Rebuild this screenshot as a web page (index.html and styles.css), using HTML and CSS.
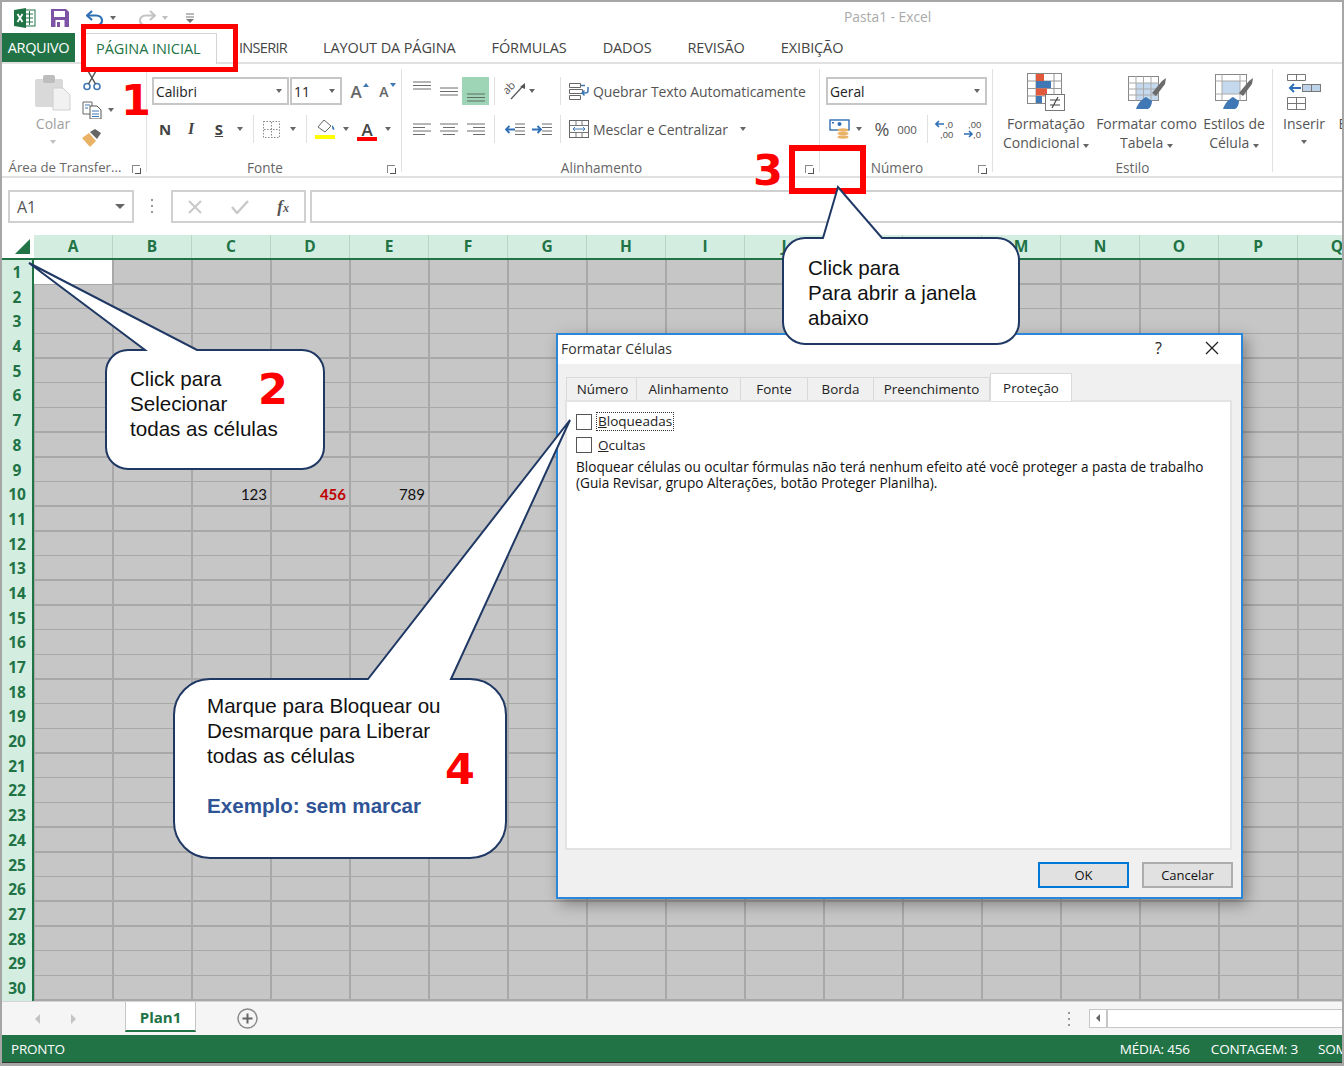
FILE: index.html
```html
<!DOCTYPE html>
<html lang="pt-BR">
<head>
<meta charset="UTF-8">
<title>Pasta1 - Excel</title>
<link rel="stylesheet" href="styles.css">
</head>
<body>
<div class="excel">

  <!-- quick access bar -->
  <div class="qat">
    <svg class="qat-logo" width="22" height="20" viewBox="0 0 22 20"><rect x="8" y="2" width="13" height="16" fill="#fff" stroke="#217346"/><path d="M12 6h7M12 10h7M12 14h7M15.500 3v14" stroke="#217346"/><path d="M0 2l12-2v20L0 18z" fill="#217346"/><path d="M3.500 6l5 8M8.500 6l-5 8" stroke="#fff" stroke-width="1.800"/></svg>
    <svg class="qat-save" width="18" height="18" viewBox="0 0 18 18"><path d="M0 0h15l3 3v15H0z" fill="#7d53a6"/><rect x="3" y="2" width="11" height="6" fill="#fff"/><rect x="4.500" y="11" width="9" height="7" fill="#fff"/><rect x="6" y="13" width="3" height="5" fill="#7d53a6"/></svg>
    <svg class="qat-undo" width="18" height="16" viewBox="0 0 18 16"><path d="M6 1L1 5.500 6 10" fill="none" stroke="#2f6fb5" stroke-width="2.200"/><path d="M2 5.500h8c4 0 6 2.500 6 5s-2 4.500-4 4.500" fill="none" stroke="#2f6fb5" stroke-width="2.200"/></svg>
    <span class="caret qat-caret"></span>
    <svg class="qat-redo" width="18" height="16" viewBox="0 0 18 16"><path d="M12 1l5 4.500L12 10" fill="none" stroke="#c4c4c4" stroke-width="2.200"/><path d="M16 5.500H8c-4 0-6 2.500-6 5s2 4.500 4 4.500" fill="none" stroke="#c4c4c4" stroke-width="2.200"/></svg>
    <span class="caret caret-light qat-caret"></span>
    <svg class="qat-more" width="8" height="10" viewBox="0 0 8 10"><path d="M0 1h8M0 4h8" stroke="#777"/><path d="M0 6h8L4 10z" fill="#777"/></svg>
    <div class="qat-title">Pasta1 - Excel</div>
  </div>

  <!-- tabs -->
  <div class="tabs">
    <div class="tab-file">ARQUIVO</div>
    <div class="tab tab-active">PÁGINA INICIAL</div>
    <div class="tab tab-first">INSERIR</div>
    <div class="tab">LAYOUT DA PÁGINA</div>
    <div class="tab">FÓRMULAS</div>
    <div class="tab">DADOS</div>
    <div class="tab">REVISÃO</div>
    <div class="tab">EXIBIÇÃO</div>
  </div>

  <!-- ribbon -->
  <div class="ribbon">

    <div class="group group-clip">
      <div class="group-body">
        <div class="big-btn colar">
          <svg class="big-icon" width="36" height="36" viewBox="0 0 36 36"><rect x="0" y="5" width="28" height="28" rx="2" fill="#d9d9d9"/><rect x="8" y="1" width="12" height="8" rx="2" fill="#bdbdbd"/><path d="M18 14h10l7 7v15H18z" fill="#f1f1f1" stroke="#cfcfcf"/></svg>
          <span class="big-text muted">Colar</span>
          <span class="caret caret-light"></span>
        </div>
        <div class="clip-tools">
          <svg class="clip-scissors" width="20" height="20" viewBox="0 0 20 20"><circle cx="5" cy="15.500" r="3" fill="none" stroke="#3f78b5" stroke-width="1.600"/><circle cx="15" cy="15.500" r="3" fill="none" stroke="#3f78b5" stroke-width="1.600"/><path d="M6.500 13L14 0M13.500 13L6 0" stroke="#555" stroke-width="1.500"/></svg>
          <div class="clip-copy">
            <svg width="20" height="18" viewBox="0 0 20 18"><path d="M1 1h9v12H1z" fill="#fff" stroke="#666"/><path d="M8 5h7l4 4v9H8z" fill="#fff" stroke="#555"/><path d="M3 4h5M3 7h3M10 10h7M10 13h7M10 15.500h7" stroke="#3f78b5"/></svg>
            <span class="caret"></span>
          </div>
          <svg class="clip-brush" width="20" height="18" viewBox="0 0 20 18"><path d="M0 9l7-5 7 8-6 6z" fill="#e9b266"/><path d="M8 3l5-3 6 4-4 6z" fill="#666"/></svg>
        </div>
      </div>
      <div class="group-foot"><span class="group-label">Área de Transfer...</span><span class="launcher"></span></div>
    </div>

    <div class="group group-font">
      <div class="group-body stack">
        <div class="row">
          <div class="select select-font"><span>Calibri</span><i class="caret"></i></div>
          <div class="select select-size"><span>11</span><i class="caret"></i></div>
          <div class="btn grow-a">A<i class="tri tri-up"></i></div>
          <div class="btn shrink-a">A<i class="tri tri-down"></i></div>
        </div>
        <div class="row">
          <div class="btn w26 fmt"><b>N</b></div>
          <div class="btn w26 fmt fmt-i">I</div>
          <div class="btn w30 fmt"><b class="under">S</b></div>
          <span class="btn w12"><i class="caret"></i></span>
          <span class="sep ml7"></span>
          <div class="btn w30 ml2"><svg width="17" height="17" viewBox="0 0 17 17"><path d="M.500.500h16v16H.500z" fill="none" stroke="#888" stroke-dasharray="1.500 1.500"/><path d="M8.500 1v15M1 8.500h15" stroke="#888" stroke-dasharray="1.500 1.500"/></svg></div>
          <span class="btn w14"><i class="caret"></i></span>
          <span class="sep ml6"></span>
          <div class="btn w30 ml3"><svg width="22" height="22" viewBox="0 0 22 22"><path d="M4 9l6-7 7 6-6 6z" fill="#fff" stroke="#666"/><path d="M18 7c2 2 3 4 2 5-2 0-2-3-2-5z" fill="#3f78b5"/><rect x="1" y="17" width="20" height="4" fill="#ffff00"/></svg></div>
          <span class="btn w12"><i class="caret"></i></span>
          <div class="btn w30 font-color">A</div>
          <span class="btn w12"><i class="caret"></i></span>
        </div>
      </div>
      <div class="group-foot"><span class="group-label">Fonte</span><span class="launcher"></span></div>
    </div>

    <div class="group group-align">
      <div class="group-body stack">
        <div class="row">
          <div class="btn w27 at-top"><svg width="18" height="9" viewBox="0 0 18 9"><path d="M0 1h18M0 4.500h18M0 8h18" stroke="#6d6d6d"/></svg></div>
          <div class="btn w27 at-mid"><svg width="18" height="9" viewBox="0 0 18 9"><path d="M0 1h18M0 4.500h18M0 8h18" stroke="#6d6d6d"/></svg></div>
          <div class="btn w27 btn-on at-bot"><svg width="18" height="9" viewBox="0 0 18 9"><path d="M0 1h18M0 4.500h18M0 8h18" stroke="#5f6f66"/></svg></div>
          <span class="sep ml5"></span>
          <div class="btn w24 ml8"><svg width="22" height="20" viewBox="0 0 22 20"><text class="orient" transform="translate(3 14) rotate(-45)">ab</text><path d="M7 18L19 5" stroke="#555" stroke-width="1.200"/><path d="M21 2v6l-5-2z" fill="#555"/></svg></div>
          <span class="btn w10"><i class="caret"></i></span>
          <span class="sep ml23"></span>
          <div class="wide-btn">
            <svg width="20" height="20" viewBox="0 0 20 20"><path d="M.500 2.500h11v4H.500zM.500 8.500h13v4H.500zM.500 14.500h11v4H.500z" fill="#fff" stroke="#666"/><path d="M12 4.500h4" stroke="#3f78b5" stroke-width="1.500"/><path d="M19 6v4c0 2-2 2-3 2h-3m2.500-2.500L13 12l2.500 2.500" fill="none" stroke="#3f78b5" stroke-width="1.500"/></svg>
            <span>Quebrar Texto Automaticamente</span>
          </div>
        </div>
        <div class="row">
          <div class="btn w27"><svg width="18" height="13" viewBox="0 0 18 13"><path d="M0 1h18M0 4.500h12M0 8h18M0 11.500h12" stroke="#6d6d6d"/></svg></div>
          <div class="btn w27"><svg width="18" height="13" viewBox="0 0 18 13"><path d="M0 1h18M3 4.500h12M0 8h18M3 11.500h12" stroke="#6d6d6d"/></svg></div>
          <div class="btn w27"><svg width="18" height="13" viewBox="0 0 18 13"><path d="M0 1h18M6 4.500h12M0 8h18M6 11.500h12" stroke="#6d6d6d"/></svg></div>
          <span class="sep ml5"></span>
          <div class="btn w27 ml6"><svg width="20" height="13" viewBox="0 0 20 13"><path d="M10 1h10M10 4.500h10M10 8h10M10 11.500h10" stroke="#6d6d6d"/><path d="M10 6.500H1m3.500-3.500L1 6.500 4.500 10" fill="none" stroke="#2f6fb5" stroke-width="1.800"/></svg></div>
          <div class="btn w27"><svg width="20" height="13" viewBox="0 0 20 13"><path d="M10 1h10M10 4.500h10M10 8h10M10 11.500h10" stroke="#6d6d6d"/><path d="M0 6.500h9M5.500 3L9 6.500 5.500 10" fill="none" stroke="#2f6fb5" stroke-width="1.800"/></svg></div>
          <span class="sep ml5"></span>
          <div class="wide-btn">
            <svg width="20" height="20" viewBox="0 0 20 20"><rect x=".500" y="1.500" width="19" height="17" fill="#fff" stroke="#666"/><path d="M.500 6.500h19M.500 13.500h19M7 1.500v5M13 1.500v5M7 13.500v5M13 13.500v5" stroke="#777"/><path d="M4 10h12M6 8l-2 2 2 2M14 8l2 2-2 2" fill="none" stroke="#3f78b5"/></svg>
            <span>Mesclar e Centralizar</span>
            <i class="caret merge-caret"></i>
          </div>
        </div>
      </div>
      <div class="group-foot"><span class="group-label">Alinhamento</span><span class="launcher"></span></div>
    </div>

    <div class="group group-num">
      <div class="group-body stack">
        <div class="row">
          <div class="select select-num"><span>Geral</span><i class="caret"></i></div>
        </div>
        <div class="row">
          <div class="btn w28"><svg width="22" height="20" viewBox="0 0 22 20"><rect x="1" y="1" width="19" height="10" fill="#fff" stroke="#2f6fb5" stroke-width="1.400"/><circle cx="10.500" cy="5" r="2" fill="#2f6fb5"/><rect x="3" y="3" width="2" height="1.500" fill="#2f6fb5"/><ellipse cx="14" cy="11" rx="5.500" ry="1.700" fill="#e9b266"/><ellipse cx="14" cy="14.500" rx="5.500" ry="1.700" fill="#e9b266"/><ellipse cx="14" cy="18" rx="5.500" ry="1.700" fill="#e9b266"/></svg></div>
          <span class="btn w10"><i class="caret"></i></span>
          <div class="btn w24 ml6 percent">%</div>
          <div class="btn w26 thousand">000</div>
          <span class="sep ml7"></span>
          <div class="btn w26 ml5"><svg width="22" height="22" viewBox="0 0 22 22"><path d="M9 6H1m3-3L1 6l3 3" fill="none" stroke="#2f6fb5" stroke-width="1.600"/><text x="10" y="9.500" class="dec">,0</text><text x="5" y="20" class="dec">,00</text></svg></div>
          <div class="btn w26 ml2"><svg width="22" height="22" viewBox="0 0 22 22"><text x="5" y="9.500" class="dec">,00</text><path d="M1 16h8m-3-3l3 3-3 3" fill="none" stroke="#2f6fb5" stroke-width="1.600"/><text x="10" y="20" class="dec">,0</text></svg></div>
        </div>
      </div>
      <div class="group-foot"><span class="group-label">Número</span><span class="launcher"></span></div>
    </div>

    <div class="group group-style">
      <div class="group-body">
        <div class="big-btn cond">
          <svg class="big-icon" width="38" height="38" viewBox="0 0 38 38"><rect x=".500" y=".500" width="34" height="30" fill="#fff" stroke="#888"/><path d="M9 .500v30M27 .500v30M.500 8h34M.500 15.500h34M.500 23h34" stroke="#999"/><rect x="9" y="1" width="8" height="7" fill="#e2583a"/><rect x="9" y="8" width="15" height="7" fill="#3f78b5"/><rect x="9" y="15.500" width="11" height="7" fill="#e2583a"/><rect x="9" y="23" width="6" height="7" fill="#3f78b5"/><rect x="18.500" y="21.500" width="19" height="16" fill="#fff" stroke="#777"/><path d="M23 27h10M23 32h10M31 24l-6 11" stroke="#444" stroke-width="1.200"/></svg>
          <span class="big-text">Formatação</span>
          <span class="big-text">Condicional <i class="caret"></i></span>
        </div>
        <div class="big-btn fcomo">
          <svg class="big-icon" width="38" height="38" viewBox="0 0 38 38"><rect x=".500" y="3.500" width="30" height="24" fill="#fff" stroke="#888"/><rect x="8" y="10" width="22" height="17" fill="#c4d9ee"/><path d="M.500 10h30M.500 16h30M.500 22h30M8 3.500v24M15.500 3.500v24M23 3.500v24" stroke="#aaa"/><path d="M24 20l10-12 4-3-1 6-9 12z" fill="#6b6b6b"/><path d="M8 36c2-6 6-10 10-12l6 4c0 4-2 7-4 8z" fill="#3f78b5"/></svg>
          <span class="big-text">Formatar como</span>
          <span class="big-text">Tabela <i class="caret"></i></span>
        </div>
        <div class="big-btn estilos">
          <svg class="big-icon" width="38" height="38" viewBox="0 0 38 38"><rect x=".500" y="1.500" width="31" height="26" fill="#fff" stroke="#888"/><rect x="7" y="8" width="18" height="13" fill="#c4d9ee"/><path d="M.500 8h31M.500 21h31M7 1.500v26M25 1.500v26" stroke="#aaa"/><path d="M24 20l10-12 4-3-1 6-9 12z" fill="#6b6b6b"/><path d="M8 36c2-6 6-10 10-12l6 4c0 4-2 7-4 8z" fill="#3f78b5"/></svg>
          <span class="big-text">Estilos de</span>
          <span class="big-text">Célula <i class="caret"></i></span>
        </div>
      </div>
      <div class="group-foot"><span class="group-label">Estilo</span></div>
    </div>

    <div class="group group-cells">
      <div class="group-body">
        <div class="big-btn inserir">
          <svg class="big-icon" width="34" height="38" viewBox="0 0 34 38"><path d="M.500 1.500h18v6H.500zM.500 24.500h18v12H.500z" fill="#fff" stroke="#777"/><path d="M9.500 1.500v6M9.500 24.500v12M.500 30.500h18" stroke="#777"/><path d="M14 15H3m4-4l-4 4 4 4" fill="none" stroke="#2f6fb5" stroke-width="2"/><rect x="15.500" y="11.500" width="18" height="7" fill="#bcd3ea" stroke="#777"/><path d="M24.500 11.500v7" stroke="#777"/></svg>
          <span class="big-text">Inserir</span>
          <span class="caret"></span>
        </div>
        <div class="big-btn excluir">
          <svg class="big-icon" width="34" height="38" viewBox="0 0 34 38"><path d="M.500 1.500h18v6H.500zM.500 24.500h18v12H.500z" fill="#fff" stroke="#777"/></svg>
          <span class="big-text">Excluir</span>
          <span class="caret"></span>
        </div>
      </div>
    </div>
  </div>

  <!-- formula bar -->
  <div class="formula-bar">
    <div class="name-box"><span>A1</span><i class="caret caret-dark"></i></div>
    <div class="fb-dots"></div>
    <div class="fb-actions">
      <svg width="16" height="14" viewBox="0 0 16 14"><path d="M2 1l12 12M14 1L2 13" stroke="#c8c8c8" stroke-width="2"/></svg>
      <svg width="18" height="14" viewBox="0 0 18 14"><path d="M1 7l5 6L17 1" fill="none" stroke="#c8c8c8" stroke-width="2.400"/></svg>
      <span class="fx">f<small>x</small></span>
    </div>
    <div class="fb-input"></div>
  </div>

  <!-- sheet -->
  <div class="col-head">
    <div class="corner"><svg width="15" height="15" viewBox="0 0 15 15"><path d="M15 0v15H0z" fill="#217346"/></svg></div>
    <span class="col">A</span><span class="col">B</span><span class="col">C</span><span class="col">D</span><span class="col">E</span><span class="col">F</span><span class="col">G</span><span class="col">H</span><span class="col">I</span><span class="col">J</span><span class="col">K</span><span class="col">L</span><span class="col">M</span><span class="col">N</span><span class="col">O</span><span class="col">P</span><span class="col">Q</span>
  </div>
  <div class="sheet">
    <div class="row-head">
      <span>1</span><span>2</span><span>3</span><span>4</span><span>5</span><span>6</span><span>7</span><span>8</span><span>9</span><span>10</span><span>11</span><span>12</span><span>13</span><span>14</span><span>15</span><span>16</span><span>17</span><span>18</span><span>19</span><span>20</span><span>21</span><span>22</span><span>23</span><span>24</span><span>25</span><span>26</span><span>27</span><span>28</span><span>29</span><span>30</span>
    </div>
    <div class="cells">
      <div class="cell-a1"></div>
      <div class="cell cell-c10">123</div>
      <div class="cell cell-d10">456</div>
      <div class="cell cell-e10">789</div>
    </div>
  </div>

  <!-- sheet tabs -->
  <div class="sheet-bar">
    <span class="nav-l"></span>
    <span class="nav-r"></span>
    <div class="sheet-tab">Plan1</div>
    <svg class="add-sheet" width="21" height="21" viewBox="0 0 21 21"><circle cx="10.500" cy="10.500" r="9.500" fill="none" stroke="#8a8a8a" stroke-width="1.500"/><path d="M10.500 5.500v10M5.500 10.500h10" stroke="#666" stroke-width="2"/></svg>
    <div class="bar-dots"></div>
    <div class="hscroll"><span class="hscroll-btn"></span></div>
  </div>

  <!-- status bar -->
  <div class="status">
    <span class="st-ready">PRONTO</span>
    <span class="st-media">MÉDIA: 456</span>
    <span class="st-count">CONTAGEM: 3</span>
    <span class="st-sum">SOMA: 1368</span>
  </div>

  <!-- dialog -->
  <div class="dialog">
    <div class="dlg-title">
      <span class="dlg-name">Formatar Células</span>
      <span class="dlg-help">?</span>
      <svg width="14" height="14" viewBox="0 0 14 14"><path d="M1 1l12 12M13 1L1 13" stroke="#222" stroke-width="1.300"/></svg>
    </div>
    <div class="dlg-tabs">
      <span class="dtab dtab-1">Número</span>
      <span class="dtab dtab-2">Alinhamento</span>
      <span class="dtab dtab-3">Fonte</span>
      <span class="dtab dtab-4">Borda</span>
      <span class="dtab dtab-5">Preenchimento</span>
      <span class="dtab dtab-on">Proteção</span>
    </div>
    <div class="dlg-panel">
      <label class="chk"><span class="box"></span><span class="chk-focus"><u>B</u>loqueadas</span></label>
      <label class="chk chk-2"><span class="box"></span><span class="chk-plain"><u>O</u>cultas</span></label>
      <p class="dlg-note">Bloquear células ou ocultar fórmulas não terá nenhum efeito até você proteger a pasta de trabalho<br>(Guia Revisar, grupo Alterações, botão Proteger Planilha).</p>
    </div>
    <div class="dlg-foot">
      <button class="dlg-btn dlg-ok">OK</button>
      <button class="dlg-btn">Cancelar</button>
    </div>
  </div>

  <!-- annotations on top of the screenshot -->
  <div class="mark mark-1"></div>
  <div class="mark mark-3"></div>
  <svg class="callouts" width="1344" height="1066" viewBox="0 0 1344 1066">
    <path d="M128 350H145L29 263L197 350H302a22 22 0 0 1 22 22V447a22 22 0 0 1-22 22H128a22 22 0 0 1-22-22V372a22 22 0 0 1 22-22Z"/>
    <path d="M805 238H823L838 187L882 238H997a22 22 0 0 1 22 22V322a22 22 0 0 1-22 22H805a22 22 0 0 1-22-22V260a22 22 0 0 1 22-22Z"/>
    <path d="M210 679H368L570 420L451 679H470a36 36 0 0 1 36 36V822a36 36 0 0 1-36 36H210a36 36 0 0 1-36-36V715a36 36 0 0 1 36-36Z"/>
  </svg>
  <div class="note note-1">Click para<br>Selecionar<br>todas as células</div>
  <div class="note note-3">Click para<br>Para abrir a janela<br>abaixo</div>
  <div class="note note-4">Marque para Bloquear ou<br>Desmarque para Liberar<br>todas as células<br><br><b>Exemplo: sem marcar</b></div>
  <div class="num num-1">1</div>
  <div class="num num-2">2</div>
  <div class="num num-3">3</div>
  <div class="num num-4">4</div>
</div>
</body>
</html>
```

FILE: styles.css
```css
* { box-sizing: border-box; }

body {
  margin: 0;
  background: #fff;
  font-family: "Open Sans", "Noto Sans", sans-serif;
  font-size: 14px;
  color: #444;
}

.excel {
  position: relative;
  width: 1344px;
  height: 1066px;
  border: 2px solid #a6a6a6;
  border-bottom-width: 3px;
  overflow: hidden;
  display: flex;
  flex-direction: column;
  background: #fff;
}

.caret {
  display: inline-block;
  width: 0;
  height: 0;
  border-left: 3.5px solid transparent;
  border-right: 3.5px solid transparent;
  border-top: 4px solid #666;
}
.caret-light { border-top-color: #c0c0c0; }
.caret-dark { border-left-width: 5px; border-right-width: 5px; border-top-width: 5px; }

/* quick access */
.qat {
  height: 31px;
  flex: none;
  display: flex;
  align-items: center;
}
.qat-logo { margin-left: 12px; }
.qat-save { margin-left: 15px; }
.qat-undo { margin-left: 17px; }
.qat-caret { margin-left: 6px; }
.qat-redo { margin-left: 22px; }
.qat-more { margin-left: 18px; }
.qat-title {
  margin-left: 650px;
  padding-bottom: 2px;
  color: #aaa;
  font-size: 13.8px;
}

/* tabs */
.tabs {
  height: 31px;
  flex: none;
  display: flex;
  border-bottom: 2px solid #e1e1e1;
}
.tab-file {
  width: 73px;
  background: #217346;
  color: #fff;
  text-align: center;
  line-height: 30px;
  font-size: 14.5px;
  letter-spacing: -0.35px;
}
.tab {
  padding: 0 18px;
  line-height: 30px;
  font-size: 14.5px;
  letter-spacing: -0.12px;
  white-space: nowrap;
}
.tab-active {
  margin-left: 10px;
  width: 132px;
  padding: 0 0 0 10px;
  height: 31px;
  color: #217346;
  background: #fff;
  border: 1px solid #d4d4d4;
  border-bottom: none;
  letter-spacing: -0.05px;
}
.tab-first { padding-left: 22px; letter-spacing: -0.7px; }

/* ribbon */
.ribbon {
  height: 114px;
  flex: none;
  display: flex;
  border-bottom: 2px solid #e1e1e1;
  overflow: hidden;
}
.group {
  height: 103px;
  margin-top: 5px;
  display: flex;
  flex-direction: column;
  border-right: 1px solid #e1e1e1;
  flex: none;
}
.group-clip { width: 145px; }
.group-font { width: 255px; }
.group-align { width: 418px; }
.group-num { width: 173px; }
.group-style { width: 280px; }
.group-cells { border-right: none; width: 120px; }

.group-body {
  flex: none;
  height: 88px;
  display: flex;
}
.stack {
  flex-direction: column;
  gap: 10px;
  padding: 8px 0 0 6px;
}
.group-font .stack { padding-left: 5px; }

.row {
  display: flex;
  align-items: center;
  height: 28px;
}
.group-foot {
  height: 20px;
  flex: none;
  display: flex;
  align-items: center;
}
.group-label {
  flex: 1;
  text-align: center;
  font-size: 13.6px;
  color: #666;
  white-space: nowrap;
}
.group-clip .group-label { font-size: 13.2px; }
.launcher {
  position: relative;
  flex: none;
  width: 8px;
  height: 8px;
  margin: 3px 6px 0 4px;
  border-left: 1px solid #888;
  border-top: 1px solid #888;
}
.launcher::after {
  content: "";
  position: absolute;
  right: -1px;
  bottom: -1px;
  width: 5px;
  height: 5px;
  border-right: 1px solid #555;
  border-bottom: 1px solid #555;
}

.btn {
  height: 28px;
  display: flex;
  align-items: center;
  justify-content: center;
  flex: none;
  position: relative;
}
.w10 { width: 10px; }
.w12 { width: 12px; }
.w14 { width: 14px; }
.w24 { width: 24px; }
.w26 { width: 26px; }
.w27 { width: 27px; }
.w28 { width: 28px; }
.w30 { width: 30px; }
.ml2 { margin-left: 2px; }
.ml3 { margin-left: 3px; }
.ml5 { margin-left: 5px; }
.ml6 { margin-left: 6px; }
.ml7 { margin-left: 7px; }
.ml8 { margin-left: 8px; }
.ml23 { margin-left: 23px; }
.sep {
  width: 1px;
  height: 28px;
  background: #e1e1e1;
  flex: none;
}
.btn-on { background: #9fd5b7; }
.at-top { align-items: flex-start; padding-top: 4px; }
.at-mid { padding-top: 0; }
.at-bot { align-items: flex-end; padding-bottom: 3px; }

.select {
  height: 28px;
  border: 2px solid #c6c6c6;
  background: #fff;
  display: flex;
  align-items: center;
  justify-content: space-between;
  padding: 0 5px 0 2px;
  font-size: 13.8px;
  color: #222;
  flex: none;
}
.select-font { width: 137px; }
.select-size { width: 52px; margin-left: 1px; }
.select-num { width: 161px; }

.grow-a, .shrink-a {
  font-weight: 600;
  color: #666;
}
.grow-a { font-size: 17px; width: 26px; margin-left: 1px; }
.shrink-a { font-size: 14px; width: 24px; margin-left: 3px; }
.tri {
  position: absolute;
  top: 6px;
  right: 0;
  width: 0;
  height: 0;
  border-left: 3px solid transparent;
  border-right: 3px solid transparent;
}
.tri-up { border-bottom: 4px solid #3f78b5; }
.tri-down { border-top: 4px solid #3f78b5; }

.fmt { font-size: 15px; color: #444; font-family: "Open Sans", sans-serif; }
.fmt b { font-weight: 700; }
.fmt-i { font-style: italic; font-family: "Liberation Serif", serif; font-weight: 700; font-size: 16px; }
.under { text-decoration: underline; }
.font-color {
  font-size: 17px;
  font-weight: 600;
  border-bottom: none;
}
.font-color::after {
  content: "";
  position: absolute;
  left: 5px;
  right: 5px;
  bottom: 2px;
  height: 4px;
  background: #f00;
}
.percent { font-size: 18px; color: #555; }
.thousand { font-size: 11.5px; color: #555; }
.dec { font-size: 9.5px; fill: #555; font-family: "Liberation Sans", sans-serif; }
.orient { font-size: 11px; fill: #555; font-family: "Open Sans", sans-serif; }

.wide-btn {
  display: flex;
  align-items: center;
  gap: 4px;
  margin-left: 8px;
  white-space: nowrap;
  font-size: 14px;
  letter-spacing: -0.1px;
  color: #555;
}
.merge-caret { margin-left: 8px; }

.big-btn {
  display: flex;
  flex-direction: column;
  align-items: center;
  padding-top: 4px;
  flex: none;
  font-size: 14px;
  color: #555;
}
.big-icon { height: 38px; margin-bottom: 3px; flex: none; }
.big-text { line-height: 19px; white-space: nowrap; }
.big-btn > .caret { margin-top: 7px; }
.muted { color: #a0a0a0; }
.colar { width: 54px; margin-left: 24px; }
.cond { width: 100px; margin-left: 3px; }
.fcomo { width: 101px; }
.estilos { width: 70px; margin-left: 2px; }
.inserir { width: 62px; }
.excluir { width: 50px; }

.clip-tools {
  width: 40px;
  display: flex;
  flex-direction: column;
  align-items: flex-start;
  gap: 10px;
  padding-top: 2px;
  margin-left: 2px;
}
.clip-copy { display: flex; align-items: center; gap: 6px; }

/* formula bar */
.formula-bar {
  height: 57px;
  flex: none;
  display: flex;
  align-items: flex-start;
  padding: 12px 0 0 6px;
}
.name-box {
  width: 126px;
  height: 33px;
  border: 2px solid #d0d0d0;
  display: flex;
  align-items: center;
  justify-content: space-between;
  padding: 0 7px;
  font-size: 16px;
  color: #555;
}
.fb-dots {
  width: 2px;
  height: 14px;
  margin: 9px 18px 0 17px;
  background: repeating-linear-gradient(to bottom, #999 0 2px, transparent 2px 6px);
}
.fb-actions {
  width: 135px;
  height: 33px;
  border: 2px solid #d0d0d0;
  display: flex;
  align-items: center;
  justify-content: space-between;
  padding: 0 15px 0 14px;
}
.fx {
  font-family: "Liberation Serif", serif;
  font-style: italic;
  font-weight: 700;
  font-size: 17px;
  color: #555;
}
.fx small { font-size: 12px; }
.fb-input {
  flex: 1;
  margin-left: 4px;
  height: 33px;
  border: 2px solid #d0d0d0;
  border-right: none;
}

/* sheet */
.col-head {
  height: 25px;
  flex: none;
  display: flex;
  border-bottom: 2px solid #217346;
  background: #d3eee0;
}
.corner {
  width: 32px;
  flex: none;
  background: #fff;
  display: flex;
  align-items: center;
  padding-left: 13px;
}
.col {
  width: 79px;
  flex: none;
  text-align: center;
  font-weight: 700;
  font-size: 15.5px;
  line-height: 22px;
  color: #217346;
  border-right: 1px solid #b8d6c6;
}
.sheet {
  height: 741px;
  flex: none;
  display: flex;
}
.row-head {
  width: 32px;
  flex: none;
  display: grid;
  grid-template-rows: repeat(30, 24.69px);
  background: #d3eee0;
  border-right: 2px solid #217346;
}
.row-head span {
  text-align: center;
  font-weight: 700;
  font-size: 15.5px;
  line-height: 25px;
  color: #217346;
}
.cells {
  flex: 1;
  display: grid;
  grid-template-columns: 78px repeat(17, 79px);
  grid-template-rows: repeat(30, 24.69px);
  background-color: #c6c6c6;
  background-image:
    repeating-linear-gradient(to right, transparent 0 77px, #a8a8a8 77px 79px),
    repeating-linear-gradient(to bottom, transparent 0 23.19px, #a8a8a8 23.19px 24.69px);
  background-position: 1px 0, 0 0;
}
.cell-a1 {
  grid-column: 1;
  grid-row: 1;
  background: #fff;
  margin-bottom: 1px;
}
.cell {
  grid-row: 10;
  text-align: right;
  padding-right: 3px;
  font-family: "Lato", sans-serif;
  font-size: 15px;
  line-height: 24px;
  color: #111;
}
.cell-c10 { grid-column: 3; }
.cell-d10 { grid-column: 4; color: #c00000; font-weight: 700; }
.cell-e10 { grid-column: 5; }

/* sheet tabs */
.sheet-bar {
  flex: 1;
  background: #f5f5f5;
  display: flex;
  align-items: flex-start;
  border-top: 1px solid #d4d4d4;
}
.nav-l, .nav-r {
  width: 0;
  height: 0;
  margin-top: 12px;
  border-top: 5px solid transparent;
  border-bottom: 5px solid transparent;
}
.nav-l { margin-left: 33px; border-right: 5px solid #c4c4c4; }
.nav-r { margin-left: 31px; border-left: 5px solid #c4c4c4; }
.sheet-tab {
  width: 71px;
  height: 30px;
  margin-left: 49px;
  background: #fff;
  border: 1px solid #c6c6c6;
  border-top: none;
  border-bottom: 2px solid #217346;
  text-align: center;
  line-height: 30px;
  font-weight: 700;
  font-size: 15px;
  color: #217346;
}
.add-sheet { margin: 6px 0 0 41px; }
.bar-dots {
  width: 2px;
  height: 14px;
  margin: 10px 0 0 810px;
  background: repeating-linear-gradient(to bottom, #999 0 2px, transparent 2px 6px);
}
.hscroll {
  flex: 1;
  height: 19px;
  margin: 7px 0 0 19px;
  background: #fff;
  border: 1px solid #c6c6c6;
  border-right: none;
}
.hscroll-btn {
  display: block;
  width: 18px;
  height: 17px;
  border-right: 2px solid #c6c6c6;
  position: relative;
}
.hscroll-btn::after {
  content: "";
  position: absolute;
  left: 6px;
  top: 4px;
  border-top: 4px solid transparent;
  border-bottom: 4px solid transparent;
  border-right: 4px solid #666;
}

/* status */
.status {
  height: 28px;
  flex: none;
  background: #217346;
  color: #fff;
  display: flex;
  align-items: center;
  font-size: 13.5px;
  letter-spacing: -0.2px;
  white-space: nowrap;
  border-bottom: 1px solid #333;
}
.st-ready { margin-left: 9px; }
.st-media { margin-left: 1055px; }
.st-count { margin-left: 21px; }
.st-sum { margin-left: 20px; }

/* dialog */
.dialog {
  position: absolute;
  left: 554px;
  top: 331px;
  width: 687px;
  height: 566px;
  background: #f0f0f0;
  border: 2px solid #2b87d8;
  box-shadow: 4px 5px 14px rgba(0, 0, 0, 0.35);
  display: flex;
  flex-direction: column;
  font-size: 13.5px;
  color: #222;
}
.dlg-title {
  height: 29px;
  flex: none;
  background: #fff;
  display: flex;
  align-items: center;
  padding: 0 22px 3px 3px;
  font-size: 14px;
}
.dlg-name { flex: 1; color: #333; }
.dlg-help { margin-right: 43px; font-size: 16px; }
.dlg-tabs {
  height: 36px;
  flex: none;
  display: flex;
  align-items: flex-end;
  padding-left: 8px;
}
.dtab {
  height: 23px;
  line-height: 22px;
  text-align: center;
  background: #f0f0f0;
  border: 1px solid #d9d9d9;
  border-left: none;
  border-bottom: none;
  font-size: 13.4px;
}
.dtab-1 { width: 71px; padding-left: 2px; border-left: 1px solid #d9d9d9; }
.dtab-2 { width: 104px; }
.dtab-3 { width: 67px; }
.dtab-4 { width: 66px; }
.dtab-5 { width: 116px; }
.dtab-on {
  width: 82px;
  height: 28px;
  line-height: 28px;
  background: #fff;
  position: relative;
  top: 1px;
  border-left: 1px solid #d9d9d9;
}
.dlg-panel {
  height: 450px;
  flex: none;
  margin: 0 9px 0 7px;
  background: #fff;
  border: 2px solid #e3e3e3;
  padding: 10px 0 0 9px;
}
.chk {
  display: flex;
  align-items: center;
  height: 19px;
  gap: 4px;
}
.chk-2 { margin-top: 4px; }
.box {
  width: 16px;
  height: 16px;
  border: 1.5px solid #555;
  background: #fff;
  flex: none;
}
.chk-focus {
  border: 1px dotted #333;
  padding: 0 1px;
  line-height: 17px;
}
.chk-plain { padding-left: 2px; }
.dlg-note {
  margin: 5px 0 0;
  font-size: 13.6px;
  line-height: 16px;
  color: #111;
  white-space: nowrap;
}
.dlg-foot {
  flex: 1;
  display: flex;
  justify-content: flex-end;
  gap: 13px;
  padding: 12px 8px 0 0;
}
.dlg-btn {
  width: 91px;
  height: 26px;
  background: #e1e1e1;
  border: 2px solid #adadad;
  font-family: inherit;
  font-size: 13px;
  color: #111;
  padding: 0;
}
.dlg-ok { border-color: #0078d7; }

/* annotations */
.mark {
  position: absolute;
  border: 5px solid #f00;
}
.mark-1 { left: 79px; top: 22px; width: 157px; height: 48px; }
.mark-3 { left: 787px; top: 143px; width: 77px; height: 49px; border-width: 6px; }

.callouts {
  position: absolute;
  left: -2px;
  top: -2px;
  pointer-events: none;
}
.callouts path {
  fill: #fff;
  stroke: #1f3864;
  stroke-width: 2;
}
.note {
  position: absolute;
  font-family: "Liberation Sans", Arial, sans-serif;
  font-size: 20.6px;
  line-height: 25px;
  color: #111;
  white-space: nowrap;
}
.note b { color: #2f5496; }
.note-1 { left: 128px; top: 364px; }
.note-3 { left: 806px; top: 253px; }
.note-4 { left: 205px; top: 691px; }

.num {
  position: absolute;
  font-family: "DejaVu Sans", sans-serif;
  font-weight: 700;
  font-size: 43px;
  line-height: 50px;
  color: #f00;
}
.num-1 { left: 119px; top: 73px; }
.num-2 { left: 256px; top: 362px; }
.num-3 { left: 751px; top: 143px; }
.num-4 { left: 443px; top: 742px; }
```
